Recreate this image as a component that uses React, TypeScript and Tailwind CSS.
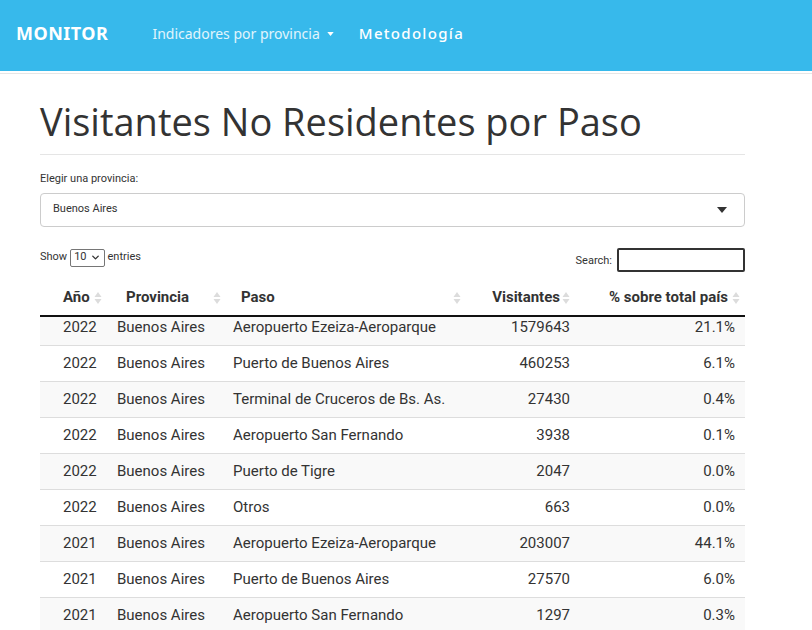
import { ChevronDown } from 'lucide-react'

const ROWS = [
  { anio: 2022, prov: 'Buenos Aires', paso: 'Aeropuerto Ezeiza-Aeroparque', vis: 1579643, pct: '21.1%' },
  { anio: 2022, prov: 'Buenos Aires', paso: 'Puerto de Buenos Aires', vis: 460253, pct: '6.1%' },
  { anio: 2022, prov: 'Buenos Aires', paso: 'Terminal de Cruceros de Bs. As.', vis: 27430, pct: '0.4%' },
  { anio: 2022, prov: 'Buenos Aires', paso: 'Aeropuerto San Fernando', vis: 3938, pct: '0.1%' },
  { anio: 2022, prov: 'Buenos Aires', paso: 'Puerto de Tigre', vis: 2047, pct: '0.0%' },
  { anio: 2022, prov: 'Buenos Aires', paso: 'Otros', vis: 663, pct: '0.0%' },
  { anio: 2021, prov: 'Buenos Aires', paso: 'Aeropuerto Ezeiza-Aeroparque', vis: 203007, pct: '44.1%' },
  { anio: 2021, prov: 'Buenos Aires', paso: 'Puerto de Buenos Aires', vis: 27570, pct: '6.0%' },
  { anio: 2021, prov: 'Buenos Aires', paso: 'Aeropuerto San Fernando', vis: 1297, pct: '0.3%' },
]

function SortIcon() {
  return (
    <svg width="8" height="14" viewBox="0 0 8 14" className="shrink-0">
      <polygon points="4,1 7.5,6 0.5,6" fill="#dcdcdc" />
      <polygon points="0.5,8 7.5,8 4,13" fill="#dcdcdc" />
    </svg>
  )
}

export default function App() {
  return (
    <div className="h-[630px] overflow-hidden bg-white" style={{ fontFamily: 'Roboto, sans-serif' }}>
      <nav className="h-[71px] bg-[#37b9eb] flex items-center px-4 pb-[5px] text-white" style={{ fontFamily: '"Noto Sans", sans-serif' }}>
        <span className="text-[18px] font-bold tracking-[0.5px]">MONITOR</span>
        <span className="ml-[44px] text-[14px] text-white/85 flex items-center">
          Indicadores por provincia
          <svg width="7" height="4" viewBox="0 0 8 5" className="ml-[7px] mt-[1px]"><polygon points="0,0 8,0 4,5" fill="white" /></svg>
        </span>
        <span className="ml-[25px] text-[15px] font-medium tracking-[1.3px]">Metodología</span>
      </nav>
      <div className="h-[2px] bg-white" />
      <div className="h-px bg-[#e6e6e6]" />

      <main className="w-[705px] ml-[40px]">
        <h1 className="mt-[23px] text-[38px] leading-[48px] text-[#333] pb-[9px] border-b border-[#e5e5e5]" style={{ fontFamily: '"Open Sans", sans-serif' }}>
          Visitantes No Residentes por Paso
        </h1>

        <label className="block mt-[16px] text-[11px] text-[#333]">Elegir una provincia:</label>
        <div className="mt-[5px] h-[34px] border border-[#ccc] rounded-[4px] flex items-center justify-between pl-[12px] pr-[17px] text-[11px] text-[#333]">
          <span>Buenos Aires</span>
          <svg width="10" height="6" viewBox="0 0 10 6"><polygon points="0,0 10,0 5,6" fill="#333" /></svg>
        </div>

        <div className="mt-[21px] flex items-start justify-between text-[11px] text-[#333]">
          <div className="flex items-center gap-[3px] mt-[1px]">
            <span>Show</span>
            <span className="h-[18px] border border-[#767676] rounded-[2px] flex items-center gap-[3px] px-[3px] text-[11px]">
              10 <ChevronDown size={11} strokeWidth={3} />
            </span>
            <span>entries</span>
          </div>
          <div className="flex items-center gap-[5px]">
            <span className="mt-[3px]">Search:</span>
            <span className="w-[128px] h-[24px] border-2 border-[#333] rounded-[2px]" />
          </div>
        </div>

        <div className="mt-[9px] h-[36px] flex items-center text-[15px] font-bold text-[#333] border-b-2 border-[#111]">
          <div className="w-[77px] pl-[23px] flex items-center gap-[4px]">Año <SortIcon /></div>
          <div className="w-[108px] pl-[9px] flex items-center justify-between pr-[4px]">Provincia <SortIcon /></div>
          <div className="w-[247px] pl-[16px] flex items-center justify-between pr-[11px]">Paso <SortIcon /></div>
          <div className="w-[98px] flex items-center justify-end gap-[2px]">Visitantes <SortIcon /></div>
          <div className="flex-1 flex items-center justify-end gap-[4px] pr-[5px]">% sobre total país <SortIcon /></div>
        </div>

        <div className="overflow-hidden">
          <div className="-mt-[7px]">
            {ROWS.map((r, i) => (
              <div
                key={i}
                className={`h-[36px] flex items-center text-[15px] text-[#333] border-b border-[#ddd] ${i % 2 === 0 ? 'bg-[#f9f9f9]' : 'bg-white'}`}
              >
                <div className="w-[77px] pl-[23px]">{r.anio}</div>
                <div className="w-[116px]">{r.prov}</div>
                <div className="w-[247px]">{r.paso}</div>
                <div className="w-[90px] text-right">{r.vis}</div>
                <div className="flex-1 text-right pr-[10px]">{r.pct}</div>
              </div>
            ))}
          </div>
        </div>
      </main>
    </div>
  )
}
